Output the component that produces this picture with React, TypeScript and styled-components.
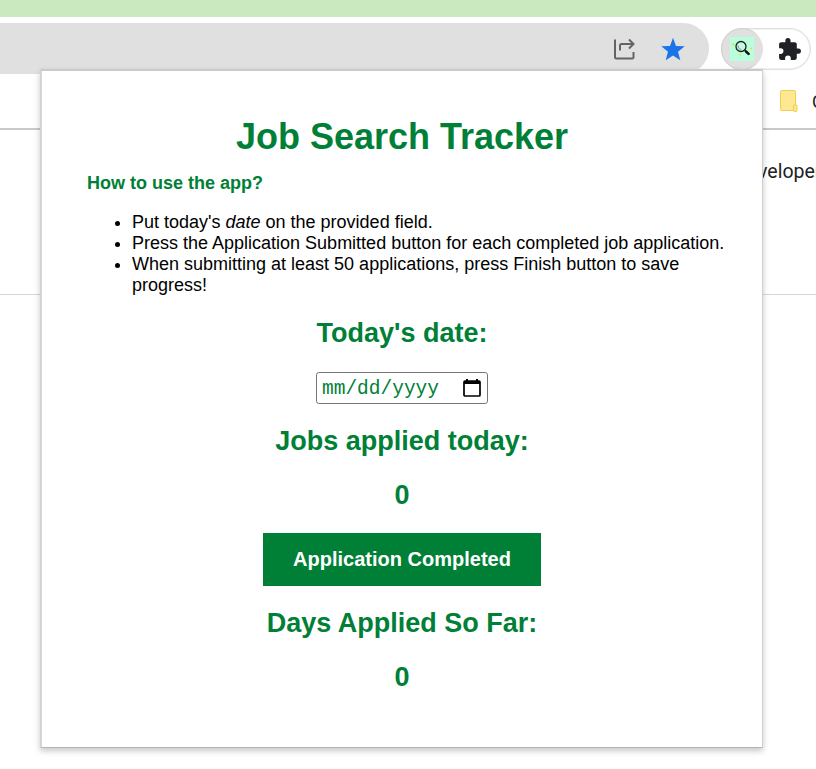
import React from "react";
import styled, { createGlobalStyle } from "styled-components";

const GlobalStyle = createGlobalStyle`
  * { box-sizing: border-box; }
  html, body { margin: 0; background: #fff; overflow: hidden; }
  h1, h2, h3, p, ul { margin: 0; }
  svg { flex: none; }
`;

const Browser = styled.div`
  position: relative;
  width: 816px;
  height: 769px;
  overflow: hidden;
  background: #fff;
  font-family: "Liberation Sans", Arial, sans-serif;
`;
const TabStrip = styled.div`
  height: 17px;
  background: #cbe9bf;
`;
const Toolbar = styled.div`
  display: flex;
  align-items: flex-start;
  height: 57px;
  padding-top: 6px;
`;
const AddressBar = styled.div`
  display: flex;
  align-items: center;
  justify-content: flex-end;
  gap: 24px;
  width: 709px;
  height: 51px;
  padding-right: 23px;
  border-radius: 0 26px 26px 0;
  background: #e0e0e0;
`;
const Extensions = styled.div`
  display: flex;
  align-items: center;
  gap: 14px;
  width: 90px;
  height: 42px;
  margin: 5px 0 0 12px;
  border: 1px solid #e1e1e1;
  box-shadow: inset 0 0 0 0.5px #e1e1e1;
  border-radius: 21px;
`;
const ActiveExtension = styled.div`
  display: flex;
  flex: none;
  align-items: center;
  justify-content: center;
  width: 42px;
  height: 42px;
  margin-left: -1px;
  border: 1px solid #cfcfcf;
  border-right-color: #e0e0e0;
  border-radius: 50%;
  background: #e0e0e0;
`;
const BookmarkBar = styled.div`
  display: flex;
  align-items: center;
  gap: 13px;
  height: 56px;
  padding-left: 779px;
  border-bottom: 2px solid #c9c9c9;
  color: #222;
  font: 18px Roboto, sans-serif;
`;
const SiteHeader = styled.div`
  height: 165px;
  padding: 30px 0 0 735px;
  border-bottom: 1px solid #d5d8d8;
  color: #202124;
  font: 19.5px/24px Roboto, sans-serif;
  white-space: nowrap;
`;
const Popup = styled.main`
  position: absolute;
  top: 69px;
  left: 40px;
  display: flex;
  flex-direction: column;
  align-items: center;
  width: 723px;
  height: 679px;
  padding: 43px 36px 0 45px;
  border: 2px solid #d4d4d4;
  border-top-color: #cacaca;
  border-right: 1px solid #cfcfcf;
  border-bottom: 1px solid #b4b4b4;
  background: #fff;
  box-shadow: 0 3px 6px rgba(0, 0, 0, 0.22);
`;
const Title = styled.h1`
  margin-right: 9px;
  color: #008037;
  font-size: 36px;
  line-height: 45px;
  white-space: nowrap;
`;
const Help = styled.h3`
  align-self: flex-start;
  margin-top: 14px;
  color: #008037;
  font-size: 18px;
  line-height: 21px;
`;
const Steps = styled.ul`
  align-self: stretch;
  margin-top: 18px;
  padding-left: 45px;
  color: #000;
  font-size: 18px;
  line-height: 21px;
`;
const Heading = styled.h2<{ $top: number }>`
  margin: ${({ $top }) => $top}px 9px 0 0;
  color: #008037;
  font-size: 27px;
  line-height: 31px;
  white-space: nowrap;
`;
const DateField = styled.div`
  display: flex;
  align-items: center;
  justify-content: space-between;
  width: 172px;
  height: 32px;
  margin: 23px 9px 0 0;
  padding: 0 6px 0 5px;
  border: 1px solid #767676;
  border-radius: 3px;
  color: #008037;
  font: 19.5px/22px "Liberation Mono", monospace;
`;
const DateText = styled.span`
  padding-top: 2px;
`;
const CompleteButton = styled.button`
  width: 278px;
  height: 53px;
  margin: 22px 9px 0 0;
  padding: 0;
  border: 0;
  background: #008037;
  color: #fff;
  font: bold 20px "Liberation Sans", Arial, sans-serif;
`;

const ShareIcon = () => (
  <svg width="24" height="24" viewBox="0 0 24 24" fill="none" stroke="#646464" strokeWidth="2">
    <path d="M3 2.500V20a1.500 1.500 0 0 0 1.500 1.500H20a1.500 1.500 0 0 0 1.500-1.500v-5M8 13.500V8.500a1.500 1.500 0 0 1 1.500-1.500H21" />
    <path d="M17 2.500l4.500 4.500-4.500 4.500" />
  </svg>
);
const StarIcon = () => (
  <svg width="26" height="26" viewBox="0 0 26 26" fill="#1a73e8">
    <path d="M13 1.700l3 8.200 8.700.4-6.700 5.400 2.300 8.600-7.300-4.900-7.300 4.900L8 15.700 1.300 10.300l8.700-.4z" />
  </svg>
);
const SearchLogo = () => (
  <svg width="24" height="24" viewBox="0 0 24 24">
    <path fill="#b9ffdc" d="M0 0h24v24H0z" />
    <g fill="#f5d54e">
      <circle cx="3.300" cy="7.500" r="1.200" />
      <circle cx="21" cy="11.500" r="1.100" />
      <circle cx="10" cy="17.800" r=".9" />
    </g>
    <circle cx="11" cy="9.500" r="5" fill="#c9f7e3" stroke="#17221e" strokeWidth="1.300" />
    <path d="M8.200 8.500a3 3 0 0 0 3 3.800" fill="none" stroke="#4f6b60" strokeWidth=".7" />
    <path d="M14.600 13.200l1.700 1.500" stroke="#17221e" strokeWidth="1.300" />
    <path d="M16 14.500l2.600 2.400" stroke="#111" strokeWidth="2.600" strokeLinecap="round" />
  </svg>
);
const PuzzleIcon = () => (
  <svg width="25" height="25" viewBox="0 0 24 24" fill="#202124">
    <path d="M20.500 11H19V7c0-1.100-.9-2-2-2h-4V3.500a2.500 2.500 0 0 0-5 0V5H4c-1.100 0-2 .9-2 2v3.800h1.500a2.700 2.700 0 0 1 0 5.400H2V20c0 1.100.9 2 2 2h3.800v-1.500a2.700 2.700 0 0 1 5.400 0V22H17c1.100 0 2-.9 2-2v-4h1.500a2.500 2.500 0 0 0 0-5z" />
  </svg>
);
const FolderIcon = () => (
  <svg width="20" height="22" viewBox="0 0 20 22" fill="#ffe793" stroke="#f0cd4a">
    <path d="M2.500.5h13a1 1 0 0 1 1 1v18a1 1 0 0 1-1 1h-13a1 1 0 0 1-1-1v-18a1 1 0 0 1 1-1z" />
    <path d="M14.500 20.500V16a1 1 0 0 1 1-1H17a1 1 0 0 1 1 1v4.500a1 1 0 0 1-1 1h-1.500a1 1 0 0 1-1-1z" />
  </svg>
);
const CalendarIcon = () => (
  <svg width="18" height="20" viewBox="0 0 18 20">
    <path d="M2 3h14a1 1 0 0 1 1 1v13a1 1 0 0 1-1 1H2a1 1 0 0 1-1-1V4a1 1 0 0 1 1-1z" fill="none" stroke="#000" strokeWidth="1.700" />
    <path d="M1 3h16v3H1zM3 1h2v3H3zM13 1h2v3h-2z" />
  </svg>
);

export default function App() {
  return (
    <>
      <GlobalStyle />
      <Browser>
        <TabStrip />
        <Toolbar>
          <AddressBar>
            <ShareIcon />
            <StarIcon />
          </AddressBar>
          <Extensions>
            <ActiveExtension><SearchLogo /></ActiveExtension>
            <PuzzleIcon />
          </Extensions>
        </Toolbar>
        <BookmarkBar><FolderIcon />C</BookmarkBar>
        <SiteHeader>Developer</SiteHeader>
        <Popup>
          <Title>Job Search Tracker</Title>
          <Help>How to use the app?</Help>
          <Steps>
            <li>Put today's <em>date</em> on the provided field.</li>
            <li>Press the Application Submitted button for each completed job application.</li>
            <li>When submitting at least 50 applications, press Finish button to save progress!</li>
          </Steps>
          <Heading $top={22}>Today's date:</Heading>
          <DateField><DateText>mm/dd/yyyy</DateText><CalendarIcon /></DateField>
          <Heading $top={22}>Jobs applied today:</Heading>
          <Heading $top={23}>0</Heading>
          <CompleteButton>Application Completed</CompleteButton>
          <Heading $top={22}>Days Applied So Far:</Heading>
          <Heading $top={23}>0</Heading>
        </Popup>
      </Browser>
    </>
  );
}
